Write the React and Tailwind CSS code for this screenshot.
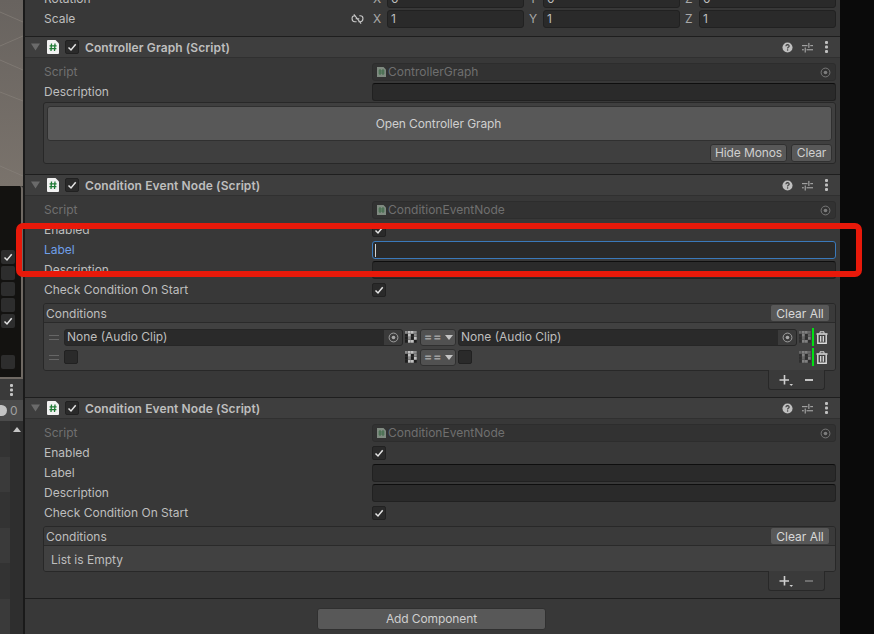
const FONT = "font-['Inter',sans-serif]";

function Check({ className = 'w-[10px] h-[10px]' }) {
  return (
    <svg viewBox="0 0 10 10" className={className} fill="none" stroke="#e4e4e4" strokeWidth="1.5">
      <path d="M1.5 5.5 L4 8 L8.7 2.3" />
    </svg>
  );
}

function CheckBox({ checked = false }) {
  return (
    <div className="w-[14px] h-[14px] rounded-[2px] bg-[#2a2a2a] border border-[#212121] flex items-center justify-center shrink-0">
      {checked && <Check />}
    </div>
  );
}

function TargetIcon({ color = '#a8a8a8' }) {
  return (
    <svg viewBox="0 0 12 12" className="w-[11px] h-[11px]" fill="none">
      <circle cx="6" cy="6" r="4.8" stroke={color} strokeWidth="1" />
      <circle cx="6" cy="6" r="2" fill={color} />
    </svg>
  );
}

function HashDoc() {
  return (
    <svg viewBox="0 0 12 14" className="w-[12px] h-[14px] shrink-0">
      <path d="M0 1 Q0 0 1 0 H8.5 L12 3.5 V13 Q12 14 11 14 H1 Q0 14 0 13 Z" fill="#f2f2f2" />
      <path d="M4.5 3.5 L4 11 M8 3.5 L7.5 11 M2.6 5.8 H9.6 M2.4 8.6 H9.4" stroke="#1f7a35" strokeWidth="1.3" fill="none" />
    </svg>
  );
}

function ComponentHeader({ title }) {
  return (
    <div className="h-[22px] bg-[#3e3e3e] border-t border-b border-t-[#1e1e1e] border-b-[#303030] flex items-center shrink-0">
      <svg viewBox="0 0 10 8" className="w-[9px] h-[8px] ml-[6px]"><path d="M0 0 H10 L5 8 Z" fill="#6a6a6a" /></svg>
      <div className="ml-[7px]"><HashDoc /></div>
      <div className="ml-[6px]"><CheckBox checked /></div>
      <span className="ml-[6px] mt-[2px] text-[12px] font-semibold text-[#bebebe] tracking-[0.1px]">{title}</span>
      <div className="ml-auto flex items-center pr-[12px]">
        <svg viewBox="0 0 12 12" className="w-[11px] h-[11px]">
          <circle cx="6" cy="6" r="5.5" fill="#c0c0c0" />
          <path d="M4.2 4.6 Q4.4 2.9 6.1 2.9 Q7.9 3 7.8 4.5 Q7.7 5.4 6.8 5.8 Q6.1 6.2 6.1 7.1" stroke="#3e3e3e" strokeWidth="1.3" fill="none" />
          <rect x="5.4" y="8" width="1.4" height="1.4" fill="#3e3e3e" />
        </svg>
        <svg viewBox="0 0 12 11" className="w-[11px] h-[11px] ml-[9px]" stroke="#c0c0c0" strokeWidth="1" fill="none">
          <path d="M0 3.5 H6 M9 3.5 H12 M7.5 0.5 V6 M0 8 H2 M5 8 H12 M3.5 5.5 V11" />
        </svg>
        <svg viewBox="0 0 3 12" className="w-[3px] h-[12px] ml-[12px]" fill="#c0c0c0">
          <rect width="3" height="3" y="0" rx="1" /><rect width="3" height="3" y="4.5" rx="1" /><rect width="3" height="3" y="9" rx="1" />
        </svg>
      </div>
    </div>
  );
}

function Row({ label, labelClass = 'text-[#bebebe]', children }) {
  return (
    <div className="h-5 flex items-center pl-[19px] pr-[4px] shrink-0">
      <span className={`w-[328px] shrink-0 text-[12px] ${labelClass}`}>{label}</span>
      <div className="flex-1 flex items-center">{children}</div>
    </div>
  );
}

function TextField({ focused = false }) {
  return (
    <div className={`flex-1 h-[18px] rounded-[3px] bg-[#2a2a2a] border ${focused ? 'border-[#3a79bb] pl-[2px] flex items-center' : 'border-[#212121] border-t-[#0e0e0e]'}`}>
      {focused && <div className="w-px h-[13px] bg-[#d2d2d2]" />}
    </div>
  );
}

function ScriptRow({ name }) {
  return (
    <Row label="Script" labelClass="text-[#707070]">
      <div className="flex-1 h-[18px] rounded-[3px] bg-[#323232] border border-[#2d2d2d] flex items-center pl-[4px] pr-[4px]">
        <svg viewBox="0 0 9 10" className="w-[9px] h-[10px] shrink-0">
          <path d="M0 0 H6.5 L9 2.5 V10 H0 Z" fill="#7f8a80" />
          <path d="M3 2 L3 8 M6 2 L6 8 M1.5 4 H7.5 M1.5 6 H7.5" stroke="#3f6b48" strokeWidth="1" fill="none" />
        </svg>
        <span className="ml-[2px] text-[12px] text-[#6f6f6f]">{name}</span>
        <div className="ml-auto"><TargetIcon color="#7d7d7d" /></div>
      </div>
    </Row>
  );
}

function SmallButton({ children, className = '' }) {
  return (
    <div className={`h-[18px] shrink-0 rounded-[3px] bg-[#585858] border border-[#303030] flex items-center justify-center text-[12px] tracking-[-0.1px] text-[#cfcfcf] ${className}`}>
      {children}
    </div>
  );
}

function GridIcon({ dim = false }) {
  const l = dim ? '#808080' : '#c0c0c0';
  const m = dim ? '#666666' : '#8c8c8c';
  const d = dim ? '#2f2f2f' : '#1e1e1e';
  const cells = [m, l, l, m, d, l, d, m, d, m, d, l, d, l, l, d];
  return (
    <svg viewBox="0 0 12 12" className="w-[12px] h-[12px] shrink-0">
      {cells.map((c, i) => <rect key={i} x={(i % 4) * 3} y={Math.floor(i / 4) * 3} width="2.7" height="2.7" fill={c} />)}
    </svg>
  );
}

function Operator() {
  return (
    <div className="w-[36px] h-[17px] rounded-[3px] bg-[#515151] border border-[#303030] flex items-center pl-[3px] shrink-0">
      <span className="text-[12px] font-bold text-[#a0a0a0] tracking-[1px] leading-none">==</span>
      <svg viewBox="0 0 8 5" className="w-[8px] h-[5px] ml-auto mr-[2px]"><path d="M0 0 H8 L4 5 Z" fill="#c4c4c4" /></svg>
    </div>
  );
}

function ObjectField({ className }) {
  return (
    <div className={`h-[17px] rounded-[3px] bg-[#2a2a2a] border border-[#262626] flex items-center pl-[2px] overflow-hidden ${className}`}>
      <span className="text-[12px] text-[#bebebe] whitespace-nowrap">None (Audio Clip)</span>
      <div className="ml-auto w-[18px] h-full bg-[#3b3b3b] flex items-center justify-center shrink-0"><TargetIcon /></div>
    </div>
  );
}

function Handle() {
  return <div className="w-[10px] h-[5px] border-t border-b border-[#666] shrink-0" />;
}

function Trash() {
  return (
    <svg viewBox="0 0 12 13" className="w-[12px] h-[13px] shrink-0 ml-[2px]" fill="none" stroke="#dcdcdc">
      <path d="M0.5 3 H11.5" strokeWidth="1.6" />
      <path d="M4 2.5 V0.8 H8 V2.5" />
      <path d="M1.8 3.5 V12.3 H10.2 V3.5" strokeWidth="1.4" />
      <path d="M4.7 5 V10.8 M7.3 5 V10.8" strokeWidth="1.3" />
    </svg>
  );
}

function ListFooter({ minusDim = false }) {
  return (
    <div className="flex justify-end pr-[15px]">
      <div className="w-[57px] h-[20px] -mt-px bg-[#3a3a3a] border border-t-0 border-[#282828] rounded-b-[3px] flex items-center pl-[10px]">
        <svg viewBox="0 0 14 12" className="w-[14px] h-[12px]">
          <path d="M0.5 6 H10 M5.5 1 V10.5" stroke="#d0d0d0" strokeWidth="1.6" fill="none" />
          <path d="M10.5 10 H14 L12.2 12 Z" fill="#d0d0d0" />
        </svg>
        <div className={`w-[8px] h-[2px] ml-[12px] ${minusDim ? 'bg-[#6e6e6e]' : 'bg-[#c4c4c4]'}`} />
      </div>
    </div>
  );
}

function ListHeader() {
  return (
    <div className="h-[19px] bg-[#3a3a3a] border-b border-[#2a2a2a] flex items-center pl-[2px] pr-[6px]">
      <span className="mt-[2px] text-[12px] text-[#bebebe]">Conditions</span>
      <div className="ml-auto w-[58px] h-[16px] pt-[2px] rounded-[2px] bg-[#585858] flex items-center justify-center text-[12px] text-[#d8d8d8]">Clear All</div>
    </div>
  );
}

function ConditionRow({ filled }) {
  return (
    <div className="h-5 flex items-center pl-[5px] pr-[7px]">
      <Handle />
      <div className="ml-[5px] flex items-center w-[339px] shrink-0">
        {filled ? <ObjectField className="w-full" /> : <CheckBox />}
      </div>
      <div className="ml-[2px]"><GridIcon /></div>
      <div className="ml-[3px]"><Operator /></div>
      <div className="ml-[2px] flex items-center w-[339px] shrink-0">
        {filled ? <ObjectField className="w-full" /> : <CheckBox />}
      </div>
      <div className="ml-[2px]"><GridIcon dim /></div>
      <div className="w-[2px] h-[18px] bg-[#00e012] ml-px shrink-0" />
      <Trash />
    </div>
  );
}

function ConditionEventNode({ filled, focused }) {
  return (
    <div className="flex flex-col shrink-0">
      <ComponentHeader title="Condition Event Node (Script)" />
      <div className="pt-[4px] flex flex-col">
        <ScriptRow name="ConditionEventNode" />
        <Row label="Enabled"><CheckBox checked /></Row>
        <Row label="Label" labelClass={focused ? 'text-[#6f9fe8]' : undefined}><TextField focused={focused} /></Row>
        <Row label="Description"><TextField /></Row>
        <Row label="Check Condition On Start"><CheckBox checked /></Row>
      </div>
      <div className="ml-[18px] mr-[4px] mt-[3px] rounded-[3px] border border-[#282828] overflow-hidden">
        <ListHeader />
        {filled ? (
          <div className="h-[47px] bg-[#414141] pt-[4px]">
            <ConditionRow filled />
            <ConditionRow />
          </div>
        ) : (
          <div className="h-[25px] bg-[#414141] flex items-center pl-[7px] pt-[2px] text-[12px] text-[#bebebe]">List is Empty</div>
        )}
      </div>
      <ListFooter minusDim={!filled} />
      <div className="h-[7px]" />
    </div>
  );
}

function TransformTail() {
  const axis = (name, value) => (
    <div className="flex items-center" key={name}>
      <span className="w-[14px] text-[12px] text-[#a8a8a8]">{name}</span>
      <div className="w-[137px] h-[18px] rounded-[3px] bg-[#2a2a2a] border border-[#212121] flex items-center pl-[3px] text-[12px] text-[#bebebe]">{value}</div>
    </div>
  );
  const row = (label, value, link) => (
    <div className="h-5 flex items-center pl-[19px] pr-[4px]">
      <span className="w-[307px] shrink-0 text-[12px] text-[#bebebe]">{label}</span>
      {link && (
        <svg viewBox="0 0 14 11" className="w-[13px] h-[10px]" fill="none" stroke="#c8c8c8" strokeWidth="1.2">
          <path d="M5 2 H4 Q1 2 1 5 Q1 8.5 4 8.5 H6 M9 2 H10 Q13 2 13 5 Q13 8.5 10 8.5 H8 M3 0.5 L11 10.5 M5 5.2 H9" />
        </svg>
      )}
      <div className="ml-auto flex gap-[5px]">
        {axis('X', value)}
        {axis('Y', value)}
        {axis('Z', value)}
      </div>
    </div>
  );
  return (
    <div className="-mt-[11px] pb-[7px] shrink-0">
      {row('Rotation', '0')}
      {row('Scale', '1', true)}
    </div>
  );
}

function ControllerGraph() {
  return (
    <div className="flex flex-col shrink-0">
      <ComponentHeader title="Controller Graph (Script)" />
      <div className="pt-[4px] flex flex-col">
        <ScriptRow name="ControllerGraph" />
        <Row label="Description"><TextField /></Row>
      </div>
      <div className="ml-[18px] mr-[4px] h-[62px] rounded-[3px] border border-[#282828] bg-[#3f3f3f] pt-[3px] px-[3px] flex flex-col">
        <div className="h-[35px] shrink-0 rounded-[3px] bg-[#585858] border border-[#303030] pr-[2px] flex items-center justify-center text-[12px] tracking-[-0.1px] text-[#cfcfcf]">Open Controller Graph</div>
        <div className="mt-[3px] flex justify-end gap-[4px]">
          <SmallButton className="w-[77px]">Hide Monos</SmallButton>
          <SmallButton className="w-[41px]">Clear</SmallButton>
        </div>
      </div>
      <div className="h-[10px]" />
    </div>
  );
}

function SceneStrip() {
  const boxes = [true, false, false, false, true];
  const stripes = ['bg-[#333333]', 'bg-[#3a3a3a]', 'bg-[#333333]', 'bg-[#3a3a3a]', 'bg-[#333333]', 'bg-[#3a3a3a]'];
  return (
    <div className="w-[25px] h-full shrink-0 flex flex-col bg-[#2d2d2d] border-r-2 border-[#1a1a1a]">
      <div className="h-[186px] bg-linear-to-b from-[#68635f] to-[#7a736c] shrink-0">
        <svg viewBox="0 0 23 186" className="w-full h-full" stroke="#8a837c" strokeWidth="0.6" fill="none">
          <path d="M0 12 L23 22 M0 46 L23 36 M0 92 L23 101 M0 60 L23 70 M0 166 L23 176" />
        </svg>
      </div>
      <div className="h-[193px] bg-[#131210] border-r-2 border-b-2 border-[#6f6963] rounded-tr-[3px] pt-[64px] pl-[1px] flex flex-col gap-[2px] shrink-0">
        {boxes.map((on, i) => (
          <div key={i} className="w-[14px] h-[14px] bg-[#2d2d2d] rounded-[2px] flex items-center justify-center">
            {on && <Check />}
          </div>
        ))}
        <div className="w-[14px] h-[14px] bg-[#2d2d2d] rounded-[2px] mt-[25px]" />
      </div>
      <div className="h-[21px] bg-[#3a3a3a] flex items-center justify-center shrink-0">
        <svg viewBox="0 0 3 12" className="w-[3px] h-[12px]" fill="#c4c4c4">
          <rect width="3" height="3" y="0" rx="1" /><rect width="3" height="3" y="4.5" rx="1" /><rect width="3" height="3" y="9" rx="1" />
        </svg>
      </div>
      <div className="h-[21px] bg-[#4b4b4b] flex items-center shrink-0">
        <div className="w-[7px] h-[11px] bg-[#c4c4c4] rounded-r-full" />
        <span className="ml-[3px] text-[12px] text-[#a0a0a0]">0</span>
      </div>
      <div className="flex-1 flex min-h-0">
        <div className="w-[10px] flex flex-col">
          {stripes.map((c, i) => <div key={i} className={`flex-1 ${c}`} />)}
        </div>
        <div className="flex-1 bg-[#2e2e2e] pt-[6px] flex justify-center">
          <svg viewBox="0 0 8 5" className="w-[8px] h-[5px]"><path d="M0 5 H8 L4 0 Z" fill="#c4c4c4" /></svg>
        </div>
      </div>
    </div>
  );
}

export default function App() {
  return (
    <div className={`relative w-[874px] h-[634px] overflow-hidden flex bg-[#0a0a0a] ${FONT}`}>
      <SceneStrip />
      <div className="w-[815px] h-full bg-[#383838] flex flex-col shrink-0 overflow-hidden">
        <TransformTail />
        <ControllerGraph />
        <ConditionEventNode filled focused />
        <ConditionEventNode />
        <div className="border-t border-[#1e1e1e] flex justify-center pt-[9px]">
          <div className="w-[229px] h-[22px] -ml-[2px] rounded-[3px] bg-[#585858] border border-[#303030] flex items-center justify-center text-[12px] tracking-[-0.1px] text-[#cfcfcf]">Add Component</div>
        </div>
      </div>
      <div className="absolute left-[16px] top-[223px] w-[846px] h-[54px] border-[6px] border-[#e8190a] rounded-[7px]" />
    </div>
  );
}
